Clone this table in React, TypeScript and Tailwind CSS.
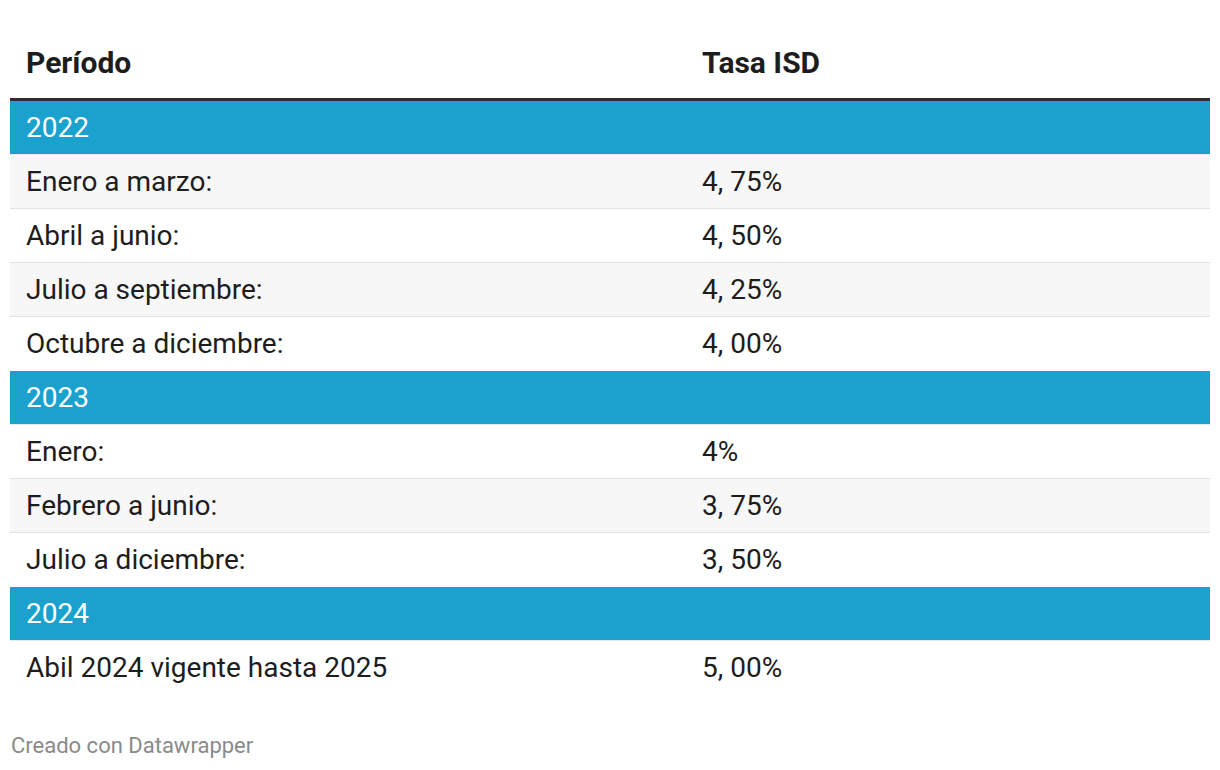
const groups = [
  {
    year: "2022",
    rows: [
      ["Enero a marzo:", "4, 75%"],
      ["Abril a junio:", "4, 50%"],
      ["Julio a septiembre:", "4, 25%"],
      ["Octubre a diciembre:", "4, 00%"],
    ],
  },
  {
    year: "2023",
    rows: [
      ["Enero:", "4%"],
      ["Febrero a junio:", "3, 75%"],
      ["Julio a diciembre:", "3, 50%"],
    ],
  },
  {
    year: "2024",
    rows: [["Abil 2024 vigente hasta 2025", "5, 00%"]],
  },
];

// filas grises: las mismas que en el original
const shaded = ["Enero a marzo:", "Julio a septiembre:", "Febrero a junio:"];

export default function App() {
  return (
    <div
      className="w-[1220px] h-[770px] bg-white px-[10px] pt-[43px] text-[#1d1d1d]"
      style={{ fontFamily: "Roboto, 'Liberation Sans', sans-serif" }}
    >
      <div className="flex border-b-[3px] border-[#2e2e2e] pt-[2px] pb-[17px] text-[30px] leading-[36px] font-bold">
        <div className="w-[676px] pl-[16px]">Período</div>
        <div className="flex-1 pl-[16px]">Tasa ISD</div>
      </div>
      {groups.map((g) => (
        <div key={g.year}>
          <div className="flex h-[54px] items-center border-b border-[#e8e8e8] bg-[#1aa1cd] pl-[16px] text-[28px] text-white">
            {g.year}
          </div>
          {g.rows.map(([a, b], i) => (
            <div
              key={a}
              className={
                "flex h-[54px] items-center text-[28px] " +
                (i < g.rows.length - 1 ? "border-b border-[#e3e3e3] " : "") +
                (shaded.includes(a) ? "bg-[#f7f7f7]" : "bg-white")
              }
            >
              <div className="w-[676px] pl-[16px]">{a}</div>
              <div className="flex-1 pl-[16px]">{b}</div>
            </div>
          ))}
        </div>
      ))}
      <div className="mt-[38px] pl-px text-[22px] leading-[26px] text-[#8a8a8a]">
        Creado con Datawrapper
      </div>
    </div>
  );
}
